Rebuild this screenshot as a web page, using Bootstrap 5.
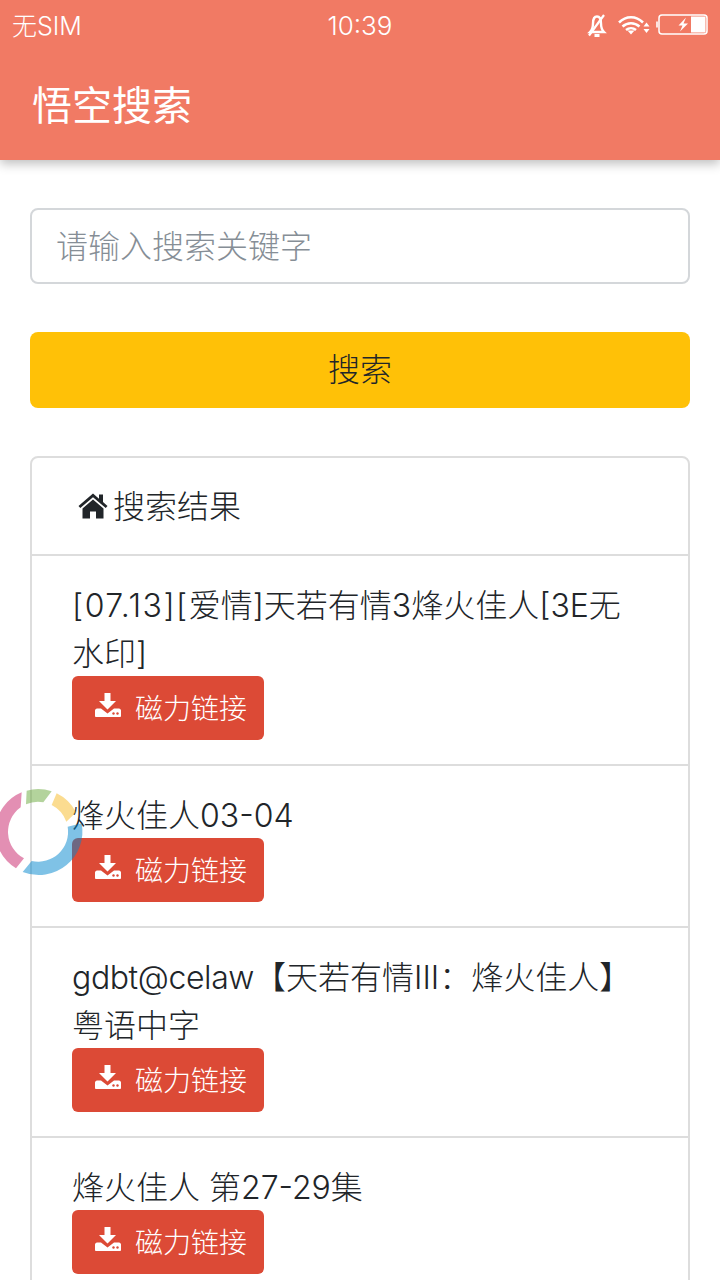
<!DOCTYPE html>
<html lang="zh-CN">
<head>
  <meta charset="UTF-8" />
  <meta name="viewport" content="width=device-width, initial-scale=1.0">
  <title>悟空搜索</title>
  <link href="https://cdn.jsdelivr.net/npm/bootstrap@5.3.0/dist/css/bootstrap.min.css" rel="stylesheet">
  <style>
    html, body { height: 1280px; overflow: hidden; }
    body {
      position: relative;
      font-family: "Inter", "Noto Sans CJK SC", sans-serif;
      font-weight: 300;
      font-size: 32px;
      line-height: 48px;
      color: #212529;
      background: #fff;
    }
    .app-top { background: #f17a64; height: 160px; color: #fff; box-shadow: 0 4px 10px rgba(0,0,0,.25); }
    .status-row { height: 52px; padding: 0 12px; font-size: 25px; line-height: 52px; }
    .status-mid { width: 100%; left: 0; top: 0; text-align: center; font-size: 26px; }
    .app-title { font-size: 40px; line-height: 52px; padding: 28px 32px 0; font-weight: 400; }
    .page-body { padding: 48px 30px 0; }
    .page-body .form-control {
      height: 76px; font-size: 32px; padding: 0 24px; border: 2px solid #d4d7da; border-radius: 8px; font-weight: 300; margin-bottom: 48px;
    }
    .form-control::placeholder { color: #868e96; }
    .page-body .btn-search { height: 76px; font-size: 32px; border-radius: 8px; background: #ffc107; border: 0; color: #212529; font-weight: 300; margin-bottom: 48px; }
    .res-card { border: 2px solid #ddd; border-radius: 8px; }
    .res-head { padding: 24px 46px; border-bottom: 2px solid #ddd; }
    .res-head span { margin-left: 5px; padding-top: 1px; margin-bottom: -1px; }
    .res-item { padding: 24px 40px; border-bottom: 2px solid #ddd; }
    .res-name { padding-top: 2px; margin-bottom: -2px; }
    .lat-wide { letter-spacing: 1.5px; }
    .lat-tight { letter-spacing: -.4px; }
    .btn-magnet {
      width: 192px; height: 64px; background: #dc4a36; color: #fff; border: 0; border-radius: 6px;
      font-size: 28px; font-weight: 300; line-height: 60px; padding: 0 0 0 23px; gap: 14px;
    }
    .btn-magnet svg { margin-bottom: 6px; }
    .btn-magnet span { padding-top: 2px; }
    .btn-magnet:hover { background: #dc4a36; color: #fff; }
    .spin-ring { position: absolute; left: 0; top: 780px; overflow: visible; }
  </style>
</head>
<body>

<svg width="0" height="0" class="position-absolute">
  <symbol id="ico-download" viewBox="0 0 26 24">
    <path d="M9.500 0h6v8h5.500l-8.500 8.500L4 8h5.500z" fill="#fff"/>
    <path d="M2 15.500h4l6.500 5 6.500-5h5c1 0 2 1 2 2v5.500c0 .5-.5 1-1 1H1c-.5 0-1-.5-1-1v-5.500c0-1 1-2 2-2z" fill="#fff"/>
    <circle cx="18.500" cy="20.500" r="1.200" fill="#dc4a36"/>
    <circle cx="22.500" cy="20.500" r="1.200" fill="#dc4a36"/>
  </symbol>
</svg>

<div class="app-top">
  <div class="status-row d-flex justify-content-between align-items-center position-relative">
    <span>无SIM</span>
    <span class="position-absolute status-mid">10:39</span>
    <svg width="122" height="24" viewBox="0 0 122 24" class="ms-auto" fill="none" stroke="#fff">
      <path d="M4 18c2-2 3-4 3-8.500C7 5 8.500 2.500 11 2.500s4 2.500 4 7c0 4 1 6.500 3 8.500z" stroke-width="2.400"/>
      <path d="M3 21.500 18 1" stroke-width="2.200"/>
      <path d="M8.500 21.500h5" stroke-width="3"/>
      <path d="M33 8.500c7-7 17-7 24 0M36.500 12.500c5-4.500 12-4.500 17 0M40 16c3-2.500 7-2.500 10 0" stroke-width="2.500"/>
      <path d="M41.500 16.500h7l-3.500 4z" fill="#fff" stroke="none"/>
      <path d="M57.500 12.500l3-4 3 4zM57.500 15l3 4 3-4z" fill="#fff" stroke="none"/>
      <rect x="73" y="1" width="48" height="19" rx="3" stroke-width="1.500"/>
      <path d="M71 7.500v6" stroke-width="2" opacity=".8"/>
      <rect x="105" y="2.500" width="14.500" height="16" fill="#fff" stroke="none"/>
      <path d="M100 3.500l-7.500 8h4l-2.500 6 8-8h-4.500z" fill="#fff" stroke="none"/>
    </svg>
  </div>
  <div class="app-title">悟空搜索</div>
</div>

<div class="page-body">
  <input type="text" class="form-control" placeholder="请输入搜索关键字">
  <button class="btn btn-search w-100 d-block">搜索</button>

  <div class="res-card">
    <div class="res-head d-flex align-items-center">
      <svg width="30" height="26" viewBox="0 0 30 26" class="flex-shrink-0" fill="#212529">
        <path d="M15 .5.500 13l1.800 2L15 4.200 27.700 15l1.800-2-4.500-3.900V1.500h-4v4.200z"/>
        <path d="M15 6.500 4.500 15.500V25.500h7.500v-7h6v7h7.500V15.500z"/>
      </svg>
      <span>搜索结果</span>
    </div>

    <div class="res-item">
      <div class="res-name"><span class="lat-wide">[07.13][</span><span>爱情]天若有情3烽火佳人[3E无</span><br><span>水印]</span></div>
      <a class="btn btn-magnet d-flex align-items-center">
        <svg width="26" height="24" class="flex-shrink-0"><use href="#ico-download"/></svg>
        <span>磁力链接</span>
      </a>
    </div>

    <div class="res-item">
      <div class="res-name">烽火佳人03-04</div>
      <a class="btn btn-magnet d-flex align-items-center">
        <svg width="26" height="24" class="flex-shrink-0"><use href="#ico-download"/></svg>
        <span>磁力链接</span>
      </a>
    </div>

    <div class="res-item">
      <div class="res-name"><span class="lat-tight">gdbt@celaw</span><span>【天若有情III：烽火佳人】</span><br><span>粤语中字</span></div>
      <a class="btn btn-magnet d-flex align-items-center">
        <svg width="26" height="24" class="flex-shrink-0"><use href="#ico-download"/></svg>
        <span>磁力链接</span>
      </a>
    </div>

    <div class="res-item">
      <div class="res-name">烽火佳人 第27-29集</div>
      <a class="btn btn-magnet d-flex align-items-center">
        <svg width="26" height="24" class="flex-shrink-0"><use href="#ico-download"/></svg>
        <span>磁力链接</span>
      </a>
    </div>
  </div>
</div>

<!-- loading ring over the list -->
<svg class="spin-ring" width="90" height="100" viewBox="0 0 270 300">
  <path d="M65 37A128 128 0 0 0 48 265L72 235A90 90 0 0 1 62 82Z" fill="rgb(199,31,103)" fill-opacity=".5"/>
  <path d="M80 32A128 128 0 0 1 155 34L130 66.500A90 90 0 0 0 78 72.500Z" fill="rgb(103,167,57)" fill-opacity=".5"/>
  <path d="M170 40A128 128 0 0 1 228 97L199 125A90 90 0 0 0 155 75Z" fill="rgb(247,185,33)" fill-opacity=".5"/>
  <path d="M245 130A131 131 0 0 1 68 276L95 243A90 90 0 0 0 203 140Z" fill="rgb(0,133,205)" fill-opacity=".5"/>
</svg>

<script src="https://cdn.jsdelivr.net/npm/bootstrap@5.3.0/dist/js/bootstrap.bundle.min.js"></script>
</body>
</html>
